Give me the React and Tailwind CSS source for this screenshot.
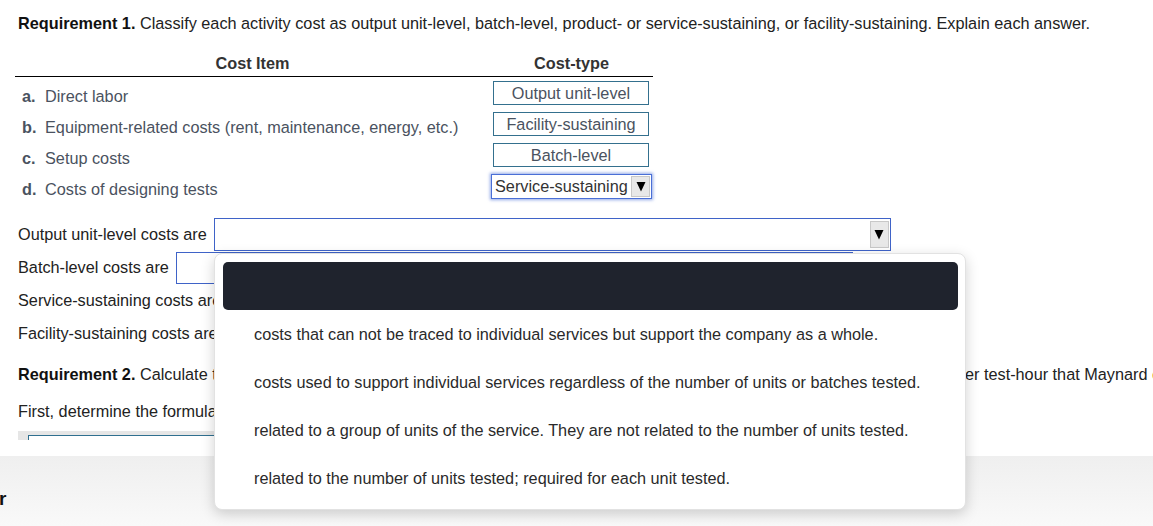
import React from "react";

const rows = [
  { k: "a.", t: "Direct labor", v: "Output unit-level" },
  { k: "b.", t: "Equipment-related costs (rent, maintenance, energy, etc.)", v: "Facility-sustaining" },
  { k: "c.", t: "Setup costs", v: "Batch-level" },
  { k: "d.", t: "Costs of designing tests", v: "Service-sustaining", sel: true },
];

const options = [
  "costs that can not be traced to individual services but support the company as a whole.",
  "costs used to support individual services regardless of the number of units or batches tested.",
  "related to a group of units of the service. They are not related to the number of units tested.",
  "related to the number of units tested; required for each unit tested.",
];

function Arrow({ cls }) {
  return (
    <div className={"flex items-center justify-center bg-[#e8e8e8] border border-[#c8c8c8] " + cls}>
      <svg width="10" height="11" viewBox="0 0 10 11">
        <polygon points="0.5,1 9.5,1 5,10.5" fill="#000" />
      </svg>
    </div>
  );
}

export default function App() {
  return (
    <div className="relative w-[1153px] h-[526px] overflow-hidden bg-white text-[16.25px] text-[#222] font-['Liberation_Sans',Arial,sans-serif]">
      <div className="pl-[18px] pt-[13px]">
        <p className="leading-[20px] whitespace-nowrap">
          <b className="text-[#111]">Requirement 1.</b> Classify each activity cost as output unit-level, batch-level, product- or service-sustaining, or facility-sustaining. Explain each answer.
        </p>

        {/* table */}
        <div className="ml-[-3px] mt-[19px] w-[638px]">
          <div className="flex h-[25px] items-center border-b border-black font-bold text-[#333] pb-[2px]">
            <div className="w-[475px] text-center">Cost Item</div>
            <div className="w-[163px] text-center">Cost-type</div>
          </div>
          {rows.map((r) => (
            <div key={r.k} className="flex h-[31px] items-center text-[#4a5260]">
              <div className="w-[475px] flex items-center pl-[7px] pt-[6px] leading-[18px]">
                <span className="font-bold w-[23px]">{r.k}</span>
                <span>{r.t}</span>
              </div>
              <div className="w-[163px] flex items-center">
                {r.sel ? (
                  <div className="ml-[1px] mt-[1px] w-[161px] h-[25px] flex items-center justify-between border border-[#4a6fd6] shadow-[0_0_3px_1px_rgba(74,111,214,0.6)] bg-white pl-[3px] pr-[1px] text-[#333]">
                    <span className="leading-[18px]">Service-sustaining</span>
                    <Arrow cls="w-[19px] h-[21px]" />
                  </div>
                ) : (
                  <div className="ml-[3px] mt-[0px] w-[156px] h-[24px] flex items-center justify-center border border-[#34708e] text-[#4a5260] leading-[18px]">
                    {r.v}
                  </div>
                )}
              </div>
            </div>
          ))}
        </div>

        {/* fill-in sentences */}
        <div className="mt-[17px]">
          <div className="flex h-[33px] items-center">
            <span className="mr-[7px]">Output unit-level costs are</span>
            <div className="w-[677px] h-[33px] border border-[#3f63c8] flex items-center justify-end pr-[1px]">
              <Arrow cls="w-[19px] h-[27px]" />
            </div>
          </div>
          <div className="flex h-[33px] items-center">
            <span className="mr-[7px]">Batch-level costs are</span>
            <div className="w-[677px] h-[32px] border border-[#3f63c8]" />
          </div>
          <div className="flex h-[33px] items-center">
            <span className="mr-[7px]">Service-sustaining costs are</span>
          </div>
          <div className="flex h-[33px] items-center">
            <span className="mr-[7px]">Facility-sustaining costs are</span>
          </div>
        </div>

        <div className="mt-[14px] leading-[20px] whitespace-nowrap flex">
          <span className="w-[947px] shrink-0">
            <b className="text-[#111]">Requirement 2.</b> Calculate the cost of each service using the rate p
          </span>
          <span>er test-hour that Maynard <span className="text-[#c8700a]">charges</span></span>
        </div>
        <p className="mt-[17px] leading-[20px] whitespace-nowrap">
          First, determine the formula to calculate the rate.
        </p>
        <div className="mt-[10px] h-[9px] bg-[#e6e6e6] relative overflow-hidden w-[600px]">
          <div className="absolute left-[10px] top-[4px] w-[600px] h-[20px] border-t border-l border-[#2f6f8f] bg-white" />
        </div>
      </div>

      <div className="absolute left-0 right-0 top-[456px] bottom-0 bg-gradient-to-b from-[#efefef] to-[#f9f9f9]">
        <div className="mt-[32px] ml-[-1px] font-bold text-[19px] leading-[22px] text-[#111]">r</div>
      </div>

      {/* dropdown popup */}
      <div className="absolute left-[214px] top-[253px] w-[752px] h-[257px] rounded-lg bg-white border border-[#e2e2e2] shadow-[0_4px_14px_rgba(0,0,0,0.18)] pt-[8px] px-[8px]">
        <div className="h-[48px] w-[735px] rounded-[5px] bg-[#1f232d]" />
        {options.map((o) => (
          <div key={o} className="h-[48px] flex items-center pl-[31px] text-[#2a2a2a] whitespace-nowrap">
            {o}
          </div>
        ))}
      </div>
    </div>
  );
}
